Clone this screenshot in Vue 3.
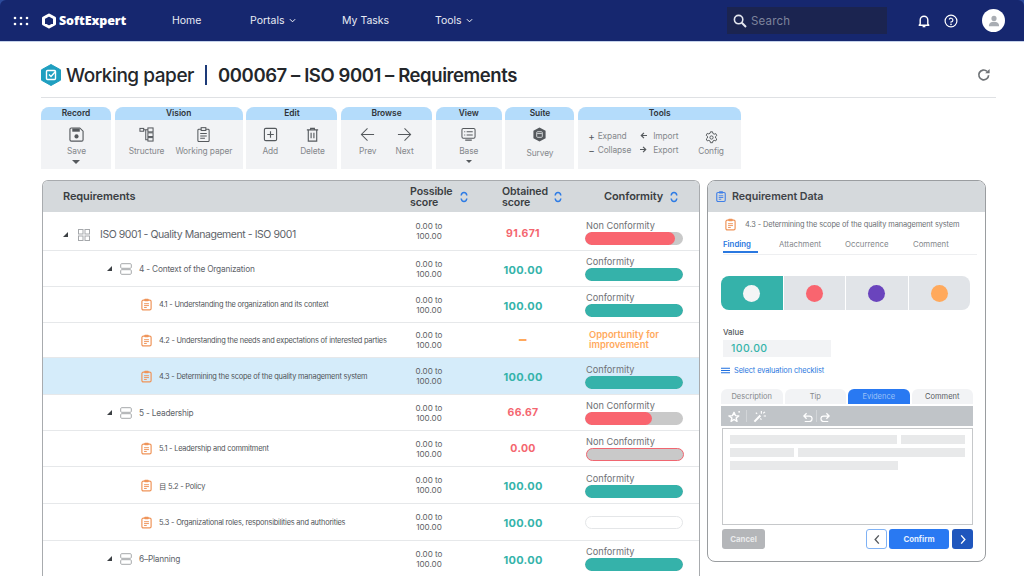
<script setup>
const rows = [
  { lv: 0, name: 'ISO 9001 - Quality Management - ISO 9001', score: '91.671', tone: 'red', label: 'Non Conformity', fill: 92, color: 'red' },
  { lv: 1, name: '4 - Context of the Organization', score: '100.00', tone: 'teal', label: 'Conformity', fill: 100, color: 'teal', h: 36 },
  { lv: 2, name: '4.1 - Understanding the organization and its context', score: '100.00', tone: 'teal', label: 'Conformity', fill: 100, color: 'teal', h: 36 },
  { lv: 2, name: '4.2 - Understanding the needs and expectations of interested parties', score: '–', tone: 'orange', opp: true, h: 35 },
  { lv: 2, name: '4.3 - Determining the scope of the quality management system', score: '100.00', tone: 'teal', label: 'Conformity', fill: 100, color: 'teal', h: 37, active: true },
  { lv: 1, name: '5 - Leadership', score: '66.67', tone: 'red', label: 'Non Conformity', fill: 68, color: 'red', h: 36 },
  { lv: 2, name: '5.1 - Leadership and commitment', score: '0.00', tone: 'red', label: 'Non Conformity', fill: 0, color: 'red', h: 36, outlined: true },
  { lv: 2, name: '目 5.2 - Policy', score: '100.00', tone: 'teal', label: 'Conformity', fill: 100, color: 'teal', h: 37 },
  { lv: 2, name: '5.3 - Organizational roles, responsibilities and authorities', score: '100.00', tone: 'teal', label: '', empty: true, h: 37 },
  { lv: 1, name: '6–Planning', score: '100.00', tone: 'teal', label: 'Conformity', fill: 100, color: 'teal', h: 36 },
]
</script>

<template>
  <div class="page">
    <svg class="defs" aria-hidden="true">
      <symbol id="clip" viewBox="0 0 24 24">
        <rect x="3.5" y="4" width="17" height="18" rx="2.5" fill="none" stroke="currentColor" stroke-width="2.2" />
        <rect x="8" y="1.5" width="8" height="4.5" rx="1.2" fill="currentColor" />
        <path d="M7.5 10.5h9M7.5 14h9M7.5 17.5h5" stroke="currentColor" stroke-width="1.8" fill="none" />
      </symbol>
      <symbol id="tri" viewBox="0 0 6 6"><polygon points="6,0 6,6 0,6" fill="currentColor" /></symbol>
      <symbol id="sort" viewBox="0 0 8 12">
        <path d="M1.2 4.5C1.4 2.6 2.5 1.5 4 1.5S6.6 2.6 6.8 4.5M1.2 7.5C1.4 9.4 2.5 10.5 4 10.5S6.6 9.4 6.8 7.5" fill="none" stroke="currentColor" stroke-width="1.5" />
      </symbol>
      <symbol id="stack" viewBox="0 0 12 12">
        <rect x=".7" y=".7" width="10.6" height="4.6" rx="1" fill="none" stroke="currentColor" />
        <rect x=".7" y="6.7" width="10.6" height="4.6" rx="1" fill="none" stroke="currentColor" />
      </symbol>
      <symbol id="grid4" viewBox="0 0 12 12">
        <rect x=".5" y=".5" width="4.5" height="4.5" fill="none" stroke="currentColor" />
        <rect x="7" y=".5" width="4.5" height="4.5" fill="none" stroke="currentColor" />
        <rect x=".5" y="7" width="4.5" height="4.5" fill="none" stroke="currentColor" />
        <rect x="7" y="7" width="4.5" height="4.5" fill="none" stroke="currentColor" />
      </symbol>
    </svg>

    <header class="topbar">
      <div class="brand-zone">
        <svg class="apps" viewBox="0 0 16 10"><g fill="#fff"><circle cx="2" cy="2" r="1.3" /><circle cx="8" cy="2" r="1.3" /><circle cx="14" cy="2" r="1.3" /><circle cx="2" cy="8" r="1.3" /><circle cx="8" cy="8" r="1.3" /><circle cx="14" cy="8" r="1.3" /></g></svg>
        <svg class="logo" viewBox="0 0 16 16"><path d="M8 2 13.5 5v6L8 14 2.5 11V5Z" fill="none" stroke="#fff" stroke-width="3" stroke-linejoin="round" /></svg>
        <span class="brand">SoftExpert</span>
      </div>
      <nav class="nav">
        <span class="n1">Home</span>
        <span class="n2">Portals <svg class="chev" viewBox="0 0 8 5"><path d="M1 1l3 3 3-3" fill="none" stroke="#fff" stroke-width="1.1" /></svg></span>
        <span class="n3">My Tasks</span>
        <span class="n4">Tools <svg class="chev" viewBox="0 0 8 5"><path d="M1 1l3 3 3-3" fill="none" stroke="#fff" stroke-width="1.1" /></svg></span>
      </nav>
      <div class="search">
        <svg class="search-ic" viewBox="0 0 14 14"><circle cx="5.6" cy="5.6" r="4.2" fill="none" stroke="#e4e7ef" stroke-width="1.6" /><path d="M8.8 8.8 13 13" stroke="#e4e7ef" stroke-width="2" /></svg>
        <span>Search</span>
      </div>
      <div class="top-icons">
        <svg class="ic-bell" viewBox="0 0 12 14"><path d="M2.2 10V6a3.8 3.8 0 0 1 7.6 0v4l1 1.2H1.2Z" fill="none" stroke="#fff" stroke-width="1.4" stroke-linejoin="round" /><path d="M4.6 12.6h2.8" stroke="#fff" stroke-width="1.4" /></svg>
        <svg class="ic-help" viewBox="0 0 14 14"><circle cx="7" cy="7" r="5.9" fill="none" stroke="#fff" stroke-width="1.2" /><path d="M5.2 5.5A1.9 1.9 0 1 1 7 8v.8" fill="none" stroke="#fff" stroke-width="1.2" /><circle cx="7" cy="10.4" r=".8" fill="#fff" /></svg>
        <div class="avatar"><svg viewBox="0 0 14 14"><circle cx="7" cy="4" r="3" fill="#a9adb3" /><path d="M1 13c0-3.5 2.4-5 6-5s6 1.5 6 5Z" fill="#a9adb3" /></svg></div>
      </div>
    </header>

    <main class="content">
      <div class="title-row">
        <svg class="title-logo" viewBox="0 0 20 22"><path d="M10 .5 19.5 5.8v10.4L10 21.5.5 16.2V5.8Z" fill="#1f9fc0" stroke="#1f9fc0" stroke-linejoin="round" /><rect x="5.5" y="6.5" width="9" height="9" rx="1" fill="none" stroke="#fff" stroke-width="1.4" /><path d="M8 10.5l2 2 4.5-5" fill="none" stroke="#fff" stroke-width="1.4" /></svg>
        <h1 class="t1">Working paper</h1>
        <i class="sep"></i>
        <h2 class="t2">000067 – ISO 9001 – Requirements</h2>
        <svg class="refresh" viewBox="0 0 14 14"><path d="M11.6 7.2A4.9 4.9 0 1 1 10 3.3" fill="none" stroke="#6e7276" stroke-width="1.7" /><path d="M12.6.9v4.4H8.2Z" fill="#6e7276" /></svg>
      </div>

      <section class="ribbon">
        <div class="grp g-record"><div class="head">Record</div>
          <div class="body"><div class="tool">
            <svg class="ti" viewBox="0 0 16 16"><path d="M1 2.5A1.5 1.5 0 0 1 2.5 1h9L15 4.5v9a1.5 1.5 0 0 1-1.5 1.5h-11A1.5 1.5 0 0 1 1 13.5Z" fill="none" stroke="#55595d" stroke-width="1.2" /><rect x="3.5" y="1.5" width="8" height="3.5" fill="#55595d" /><circle cx="8" cy="10" r="2.2" fill="#55595d" /></svg>
            <span>Save</span><i class="caret"></i></div></div>
        </div>
        <div class="grp g-vision"><div class="head">Vision</div>
          <div class="body">
            <div class="tool"><svg class="ti" viewBox="0 0 16 16" fill="none" stroke="#55595d" stroke-width="1.1"><rect x="1" y="1.5" width="4" height="3" /><rect x="9.5" y="1" width="5.5" height="4.2" /><rect x="9.5" y="6.2" width="5.5" height="4" /><rect x="9.5" y="11.3" width="5.5" height="3.7" /><path d="M5 3h4.5M7.2 3v10.5h2.3" /></svg><span>Structure</span></div>
            <div class="tool"><svg class="ti" viewBox="0 0 16 16" fill="none" stroke="#55595d" stroke-width="1.1"><rect x="2" y="2.5" width="12" height="13" rx="1" /><rect x="5.5" y=".7" width="5" height="3" fill="#f2f3f5" /><path d="M4.5 7h7M4.5 9.5h7M4.5 12h5" /></svg><span>Working paper</span></div>
          </div>
        </div>
        <div class="grp g-edit"><div class="head">Edit</div>
          <div class="body">
            <div class="tool"><svg class="ti" viewBox="0 0 16 16" fill="none" stroke="#55595d" stroke-width="1.2"><rect x="1.5" y="1.5" width="13" height="13" rx="1.5" /><path d="M8 4.5v7M4.5 8h7" /></svg><span>Add</span></div>
            <div class="tool"><svg class="ti" viewBox="0 0 16 16" fill="none" stroke="#55595d" stroke-width="1.2"><path d="M2 3h12M6 3V1.5h4V3M3.5 3v12h9V3M6.5 6v6M9.5 6v6" /></svg><span>Delete</span></div>
          </div>
        </div>
        <div class="grp g-browse"><div class="head">Browse</div>
          <div class="body">
            <div class="tool"><svg class="ti" viewBox="0 0 16 16" fill="none" stroke="#55595d" stroke-width="1.1"><path d="M15 8H1.5M8 1.5 1.5 8 8 14.5" /></svg><span>Prev</span></div>
            <div class="tool"><svg class="ti" viewBox="0 0 16 16" fill="none" stroke="#55595d" stroke-width="1.1"><path d="M1 8h13.5M8 1.5 14.5 8 8 14.5" /></svg><span>Next</span></div>
          </div>
        </div>
        <div class="grp g-view"><div class="head">View</div>
          <div class="body"><div class="tool">
            <svg class="ti" viewBox="0 0 16 16" fill="none" stroke="#55595d" stroke-width="1.1"><rect x="1" y="1.5" width="14" height="10.5" rx="1.5" /><path d="M3.5 5h1M6 5h6.5M3.5 8.5h1M6 8.5h6.5M4.5 14h7" /></svg>
            <span>Base</span><i class="caret small"></i></div></div>
        </div>
        <div class="grp g-suite"><div class="head">Suite</div>
          <div class="body"><div class="tool">
            <svg class="ti" viewBox="0 0 16 16"><path d="M8 .5 14.5 4v8L8 15.5 1.5 12V4Z" fill="#55595d" /><rect x="5" y="5" width="6" height="6" rx="1" fill="none" stroke="#d8dadd" /><path d="M5.5 7h5" stroke="#d8dadd" /></svg>
            <span class="survey">Survey</span></div></div>
        </div>
        <div class="grp g-tools"><div class="head">Tools</div>
          <div class="body">
            <div class="mini">
              <span><b>+</b> Expand</span>
              <span><b>−</b> Collapse</span>
            </div>
            <div class="mini m2">
              <span><svg viewBox="0 0 8 8"><path d="M8 4H2M4.5 1 1.5 4l3 3" fill="none" stroke="#55595d" stroke-width="1.4" /></svg> Import</span>
              <span><svg viewBox="0 0 8 8"><path d="M0 4h6M3.5 1l3 3-3 3" fill="none" stroke="#55595d" stroke-width="1.4" /></svg> Export</span>
            </div>
            <div class="tool cfg"><svg class="ti" viewBox="0 0 16 16" fill="none" stroke="#55595d" stroke-width="1.2"><path d="M6.7 1h2.6l.4 2 1.6.9 1.9-.7 1.3 2.3-1.5 1.3v1.8l1.5 1.3-1.3 2.3-1.9-.7-1.6.9-.4 2H6.7l-.4-2-1.6-.9-1.9.7-1.3-2.3 1.5-1.3V6.5L1.5 5.2l1.3-2.3 1.9.7 1.6-.9Z" stroke-linejoin="round" /><circle cx="8" cy="8" r="2" /></svg><span>Config</span></div>
          </div>
        </div>
      </section>

      <div class="workspace">
        <section class="table">
          <div class="thead">
            <div class="th-name">Requirements</div>
            <div class="th th-poss"><span>Possible<br />score</span><svg class="sort" viewBox="0 0 8 12"><use href="#sort" /></svg></div>
            <div class="th th-obt"><span>Obtained<br />score</span><svg class="sort" viewBox="0 0 8 12"><use href="#sort" /></svg></div>
            <div class="th th-conf"><span>Conformity</span><svg class="sort" viewBox="0 0 8 12"><use href="#sort" /></svg></div>
          </div>
          <div
            v-for="r in rows"
            :key="r.name"
            class="row"
            :class="[`lv${r.lv}`, { active: r.active }]"
            :style="{ height: (r.h || 39) + 'px' }"
          >
            <div class="cell-name">
              <svg v-if="r.lv < 2" class="tri" viewBox="0 0 6 6"><use href="#tri" /></svg>
              <svg v-if="r.lv === 0" class="ic-g" viewBox="0 0 12 12"><use href="#grid4" /></svg>
              <svg v-if="r.lv === 1" class="ic-s" viewBox="0 0 12 12"><use href="#stack" /></svg>
              <svg v-if="r.lv === 2" class="ic-c" viewBox="0 0 24 24"><use href="#clip" /></svg>
              <span class="nm">{{ r.name }}</span>
            </div>
            <div class="cell-poss">0.00 to<br />100.00</div>
            <div class="cell-obt" :class="r.tone">{{ r.score }}</div>
            <div class="cell-conf">
              <div v-if="r.opp" class="opp">Opportunity for<br />improvement</div>
              <template v-else>
                <div v-if="r.label" class="lab">{{ r.label }}</div>
                <div class="bar" :class="{ outlined: r.outlined, empty: r.empty }">
                  <div v-if="r.fill" class="fill" :class="r.color" :style="{ width: r.fill + '%' }"></div>
                </div>
              </template>
            </div>
          </div>
        </section>

        <aside class="panel">
          <div class="p-head">
            <svg class="p-ic" viewBox="0 0 24 24"><use href="#clip" /></svg>
            <span>Requirement Data</span>
          </div>
          <div class="p-body">
            <div class="p-sub">
              <svg class="ic-c" viewBox="0 0 24 24"><use href="#clip" /></svg>
              <span>4.3 - Determining the scope of the quality management system</span>
            </div>
            <div class="p-tabs">
              <span class="on">Finding</span>
              <span class="t-att">Attachment</span>
              <span class="t-occ">Occurrence</span>
              <span class="t-com">Comment</span>
            </div>
            <div class="seg">
              <div class="s sel"><i class="dot white"></i></div>
              <div class="s"><i class="dot red"></i></div>
              <div class="s"><i class="dot purple"></i></div>
              <div class="s"><i class="dot orange"></i></div>
            </div>
            <div class="v-label">Value</div>
            <div class="v-input">100.00</div>
            <div class="v-link">
              <svg viewBox="0 0 10 7"><path d="M0 1h10M0 3.5h10M0 6h10" stroke="#1f6fe0" stroke-width="1.2" /></svg>
              <span>Select evaluation checklist</span>
            </div>
            <div class="sub-tabs">
              <span>Description</span><span>Tip</span><span class="on">Evidence</span><span class="dark">Comment</span>
            </div>
            <div class="ed-bar">
              <svg class="e1" viewBox="0 0 14 14"><path d="M6.5 2.5 8 6l3.6.3-2.8 2.3.9 3.6-3.2-2-3.2 2 .9-3.6L1 6.3 4.8 6Z" fill="none" stroke="#fff" stroke-width="1.5" stroke-linejoin="round" /><circle cx="12" cy="2" r="1" fill="#fff" /></svg>
              <i class="ed-sep"></i>
              <svg class="e2" viewBox="0 0 14 14"><path d="M1.5 12.5 8 6" stroke="#fff" stroke-width="2.2" /><path d="M9 1v3M11 3.5l2-1.500M11.500 6.500H14M3 3l1.500 1M8 9l1 1.500" stroke="#fff" stroke-width="1.2" /></svg>
              <svg class="e3" viewBox="0 0 12 12"><path d="M3 5.5h5a3 3 0 0 1 0 6H3M5 2.5 2 5.500l3 3" fill="none" stroke="#fff" stroke-width="1.3" /></svg>
              <i class="ed-sep s2"></i>
              <svg class="e4" viewBox="0 0 12 12"><path d="M9 5.5H4a3 3 0 0 0 0 6h5M7 2.500l3 3-3 3" fill="none" stroke="#fff" stroke-width="1.3" /></svg>
            </div>
            <div class="editor">
              <div class="line"><i class="w168"></i><i class="w64"></i></div>
              <div class="line"><i class="w64"></i><i class="w168"></i></div>
              <div class="line"><i class="w168"></i></div>
            </div>
            <div class="actions">
              <button class="cancel">Cancel</button>
              <button class="prev"><svg viewBox="0 0 8 12"><path d="M6 1.5 2 6l4 4.5" fill="none" stroke="#55595d" stroke-width="1.5" /></svg></button>
              <button class="confirm">Confirm</button>
              <button class="next"><svg viewBox="0 0 8 12"><path d="M2 1.5 6 6l-4 4.5" fill="none" stroke="#fff" stroke-width="1.5" /></svg></button>
            </div>
          </div>
        </aside>
      </div>
    </main>
  </div>
</template>

<style scoped>
.page { width: 1024px; height: 576px; overflow: hidden; background: #fff; font-family: Inter, "Noto Sans", "Noto Sans CJK SC", sans-serif; color: #55595d; }
.defs { display: none; }

.topbar { height: 41px; background: #16276f; border-bottom: 1px solid #c5d2ea; border-radius: 6px 6px 0 0; box-shadow: 0 -6px 0 6px #2c4a9b; display: flex; align-items: center; color: #e8ebf4; font-size: 10.5px; }
.brand-zone { display: flex; align-items: center; width: 172px; flex: none; }
.apps { width: 16px; height: 10px; margin-left: 13px; }
.logo { width: 16px; height: 16px; margin-left: 12px; }
.brand { font-family: "Open Sans", sans-serif; font-weight: 800; font-size: 12.5px; color: #fff; margin-left: 2px; letter-spacing: -.1px; }
.nav { display: flex; align-items: center; width: 555px; flex: none; }
.nav span { display: inline-flex; align-items: center; gap: 3px; }
.n1 { width: 78px; }
.n2 { width: 92px; }
.n3 { width: 93px; }
.chev { width: 7px; height: 5px; margin-left: 1px; }
.search { width: 160px; height: 27px; background: #1b2450; flex: none; display: flex; align-items: center; color: #7d839c; font-size: 11.5px; letter-spacing: .2px; }
.search-ic { width: 14px; height: 14px; margin: 0 4px 0 6px; }
.top-icons { display: flex; align-items: center; }
.ic-bell { width: 12px; height: 14px; margin-left: 31px; }
.ic-help { width: 14px; height: 14px; margin-left: 14px; }
.avatar { width: 23px; height: 23px; border-radius: 50%; background: #fff; margin-left: 24px; display: flex; align-items: center; justify-content: center; }
.avatar svg { width: 12px; height: 12px; }

.content { padding: 0 0 0 41px; }
.title-row { width: 955px; height: 44px; border-bottom: 1px solid #dfe1e4; display: flex; align-items: center; padding-top: 11px; color: #24272b; }
.title-logo { width: 20px; height: 22px; flex: none; }
.t1 { font-size: 19px; font-weight: 500; margin: 0 0 0 5px; letter-spacing: -.45px; }
.sep { width: 2px; height: 20px; background: #1d3a78; margin: 0 11px 0 11px; }
.t2 { font-size: 18.5px; font-weight: 600; margin: 0; letter-spacing: -.42px; }
.refresh { width: 14px; height: 14px; margin-left: auto; margin-right: 5px; }

.ribbon { display: flex; gap: 3.7px; margin-top: 9px; height: 62px; }
.grp { display: flex; flex-direction: column; border-radius: 8px 8px 0 0; overflow: hidden; background: #f2f3f5; flex: none; }
.head { height: 13px; background: #b4dcfb; text-align: center; font-size: 8.4px; font-weight: 600; line-height: 13px; color: #2f3338; flex: none; }
.body { display: flex; flex: 1; justify-content: space-around; align-items: flex-start; padding-top: 7px; }
.g-record { width: 70px; }
.g-vision { width: 128px; }
.g-edit { width: 91px; }
.g-browse { width: 91px; }
.g-view { width: 66px; }
.g-suite { width: 69px; }
.g-tools { width: 163px; }
.g-record .tool { margin-left: 1px; }
.tool { display: flex; flex-direction: column; align-items: center; font-size: 8.4px; color: #85888c; letter-spacing: -.1px; white-space: nowrap; }
.ti { width: 15px; height: 15px; margin-bottom: 4px; }
.survey { margin-top: 2px; }
.caret { width: 0; height: 0; margin-top: 4px; border-left: 4px solid transparent; border-right: 4px solid transparent; border-top: 4px solid #55595d; }
.caret.small { border-left-width: 3px; border-right-width: 3px; border-top-width: 3px; }
.g-vision .body { justify-content: flex-start; padding-left: 14px; gap: 11px; }
.g-edit .body { justify-content: flex-start; padding-left: 16px; gap: 22px; }
.g-browse .body { justify-content: flex-start; padding-left: 18px; gap: 19px; }
.g-tools .body { justify-content: flex-start; padding: 11px 0 0 10px; }
.mini { display: flex; flex-direction: column; gap: 5px; font-size: 8.4px; color: #85888c; width: 52px; letter-spacing: -.1px; }
.mini span { height: 9px; display: flex; align-items: center; gap: 3px; white-space: nowrap; }
.mini b { font-weight: 400; color: #55595d; font-size: 10px; }
.mini svg { width: 7px; height: 7px; margin-right: 3px; }
.m2 { width: 58px; }
.cfg { margin-top: 0; }
.cfg .ti { width: 13px; height: 13px; margin-bottom: 2px; }

.workspace { display: flex; align-items: flex-start; margin-top: 11px; }
.table { width: 658px; margin-left: 1px; flex: none; box-sizing: border-box; border: 1.5px solid #a8abae; border-bottom: 0; border-radius: 6px 6px 0 0; overflow: hidden; height: 400px; }
.thead { height: 31px; background: #d5d9dc; display: grid; grid-template-columns: 344px 92px 104px 1fr; align-items: center; font-size: 10.6px; font-weight: 600; color: #3a3e42; line-height: 11px; letter-spacing: -.1px; }
.th-name { padding-left: 20px; font-size: 11px; }
.th { display: flex; align-items: center; gap: 7px; }
.th-poss { padding-left: 23px; gap: 8px; }
.th-obt { padding-left: 23px; gap: 6px; }
.th-conf { padding-left: 21px; font-size: 11px; gap: 7px; }
.sort { width: 8px; height: 12px; color: #2d7be5; }

.row { display: grid; grid-template-columns: 344px 84px 104px 1fr; align-items: center; border-bottom: 1px solid #e6e8ea; box-sizing: border-box; background: #fff; }
.row.active { background: #d5ecfa; }
.cell-name { display: flex; align-items: center; white-space: nowrap; color: #60646a; }
.tri { width: 5px; height: 5px; color: #3c4044; flex: none; }
.lv0 .cell-name { padding-left: 20px; padding-top: 7px; font-size: 10.5px; letter-spacing: -.44px; }
.lv1 .cell-name { padding-left: 64px; font-size: 8.3px; letter-spacing: -.2px; }
.lv2 .cell-name { padding-left: 97px; font-size: 7.4px; letter-spacing: -.2px; color: #4f5357; }
.ic-g { width: 12px; height: 12px; color: #a5a8ab; margin-left: 10px; margin-right: 10px; flex: none; }
.ic-s { width: 12px; height: 12px; color: #a5a8ab; margin-left: 8px; margin-right: 7px; flex: none; }
.ic-c { width: 13px; height: 13px; color: #ef9459; margin-right: 6px; flex: none; }
.cell-poss { font-size: 8.1px; line-height: 10px; text-align: center; color: #5d6165; }
.cell-obt { text-align: center; font-size: 11px; font-weight: 700; letter-spacing: .3px; padding-top: 2px; }
.cell-obt.red { color: #f4666f; font-size: 10.5px; padding-top: 0; }
.lv0 .cell-obt { padding-top: 4px; }
.cell-obt.teal { color: #35b3aa; }
.cell-obt.orange { color: #ffa95c; font-size: 15px; font-weight: 800; padding: 0 0 2px; line-height: 14px; }
.cell-conf { padding-left: 10px; }
.lv0 .cell-conf { padding-top: 2px; }
.lab { font-size: 9.2px; color: #6f7276; line-height: 11px; margin-bottom: 1px; padding-left: 1px; }
.bar { width: 98px; height: 13px; border-radius: 7px; background: #c9c9c9; overflow: hidden; box-sizing: border-box; }
.fill { height: 100%; border-radius: 7px; }
.fill.red { background: #f9656f; }
.fill.teal { background: #35b2aa; }
.bar.outlined { border: 1px solid #f06670; margin-left: 1px; }
.bar.empty { background: #fff; border: 1px solid #e4e6e8; }
.opp { font-size: 9.4px; font-weight: 600; line-height: 10px; color: #ffa95c; padding-left: 4px; }

.panel { width: 279px; height: 382px; margin-left: 7px; flex: none; box-sizing: border-box; border: 1.5px solid #9a9da0; border-radius: 8px; overflow: hidden; background: #fff; }
.p-head { height: 31px; background: #d5d9dc; display: flex; align-items: center; font-size: 10.7px; font-weight: 600; color: #3f4347; padding-left: 7px; gap: 5px; letter-spacing: -.05px; }
.p-ic { width: 12px; height: 13px; color: #3f7fe8; }
.p-body { padding: 0 0 0 13px; }
.p-sub { display: flex; align-items: center; height: 23px; padding-left: 3px; font-size: 7.4px; color: #6b6f73; white-space: nowrap; letter-spacing: -.1px; padding-top: 1px; box-sizing: border-box; }
.p-sub .ic-c { margin-right: 8px; }
.p-tabs { display: flex; height: 15px; width: 254px; border-bottom: 1px solid #eeeff1; font-size: 7.8px; color: #85888c; margin-left: 2px; align-items: flex-start; padding-top: 4px; position: relative; }
.p-tabs .on { color: #2a78e0; font-weight: 600; width: 56px; }
.p-tabs .on::after { content: ""; position: absolute; left: 0; width: 35px; top: 16px; height: 2px; background: #2a78e0; }
.t-att { width: 66px; }
.t-occ { width: 68px; }
.seg { display: flex; gap: 1px; width: 249px; height: 34px; margin-top: 21px; border-radius: 8px; overflow: hidden; }
.s { flex: 1; background: #e1e4e8; display: flex; align-items: center; justify-content: center; }
.s.sel { background: #35b2aa; }
.dot { width: 17px; height: 17px; border-radius: 50%; }
.dot.white { background: #f4f5f6; }
.dot.red { background: #f9656f; }
.dot.purple { background: #6a44bd; }
.dot.orange { background: #ffa95c; }
.v-label { font-size: 7.8px; color: #55595d; font-weight: 500; margin: 17px 0 0 2px; height: 10px; line-height: 10px; }
.v-input { width: 108px; height: 17px; line-height: 17px; margin: 3px 0 0 2px; background: #f2f3f5; color: #35b3aa; font-size: 10.5px; font-weight: 500; padding-left: 8px; box-sizing: border-box; letter-spacing: .4px; }
.v-link { display: flex; align-items: center; gap: 4px; color: #2a78e0; font-size: 7.4px; height: 13px; margin-top: 7px; letter-spacing: -.1px; }
.v-link svg { width: 9px; height: 7px; }
.sub-tabs { display: flex; gap: 2px; width: 252px; margin-top: 12px; height: 15px; }
.sub-tabs span { flex: 1; background: #f2f3f5; border-radius: 6px 6px 0 0; text-align: center; font-size: 7.5px; line-height: 15px; color: #85888c; }
.sub-tabs .on { background: #2979f2; color: #9cc2f7; }
.sub-tabs .dark { color: #55595d; }
.ed-bar { width: 252px; height: 20px; margin-top: 2px; background: #c0c4c8; display: flex; align-items: center; }
.ed-bar .e1 { width: 13px; height: 13px; margin-left: 7px; }
.ed-sep { width: 1px; height: 12px; background: #d2d5d8; margin-left: 5px; }
.ed-bar .e2 { width: 13px; height: 13px; margin-left: 6px; }
.ed-bar .e3 { width: 11px; height: 11px; margin-left: 36px; }
.ed-sep.s2 { margin-left: 3px; }
.ed-bar .e4 { width: 11px; height: 11px; margin-left: 3px; }
.editor { width: 251px; height: 97px; margin: 2px 0 0 1px; box-sizing: border-box; border: 1px solid #c6c8ca; padding: 6px 7px; }
.line { display: flex; gap: 4px; height: 9px; margin-bottom: 4px; }
.line i { background: #e8e9ea; height: 9px; display: block; }
.w168 { flex: 1; max-width: 168px; }
.w64 { width: 64px; }
.actions { display: flex; align-items: center; margin: 4px 0 0 1px; width: 251px; }
.actions button { height: 20px; padding: 0; border: 0; font-family: inherit; font-size: 7.8px; font-weight: 700; display: flex; align-items: center; justify-content: center; }
.actions svg { width: 8px; height: 11px; }
.cancel { width: 43px; background: #b4b6b9; color: #e9eaeb; border-radius: 3px; margin-right: 101px; }
.actions .prev { width: 21px; background: #fff; border: 1px solid #7fb2f5; border-radius: 3px; box-sizing: border-box; }
.confirm { width: 60px; background: #2979f2; color: #e4efff; border-radius: 3px; margin-left: 2px; }
.next { width: 21px; background: #1f56bd; border-radius: 3px; margin-left: 3px; }
</style>
